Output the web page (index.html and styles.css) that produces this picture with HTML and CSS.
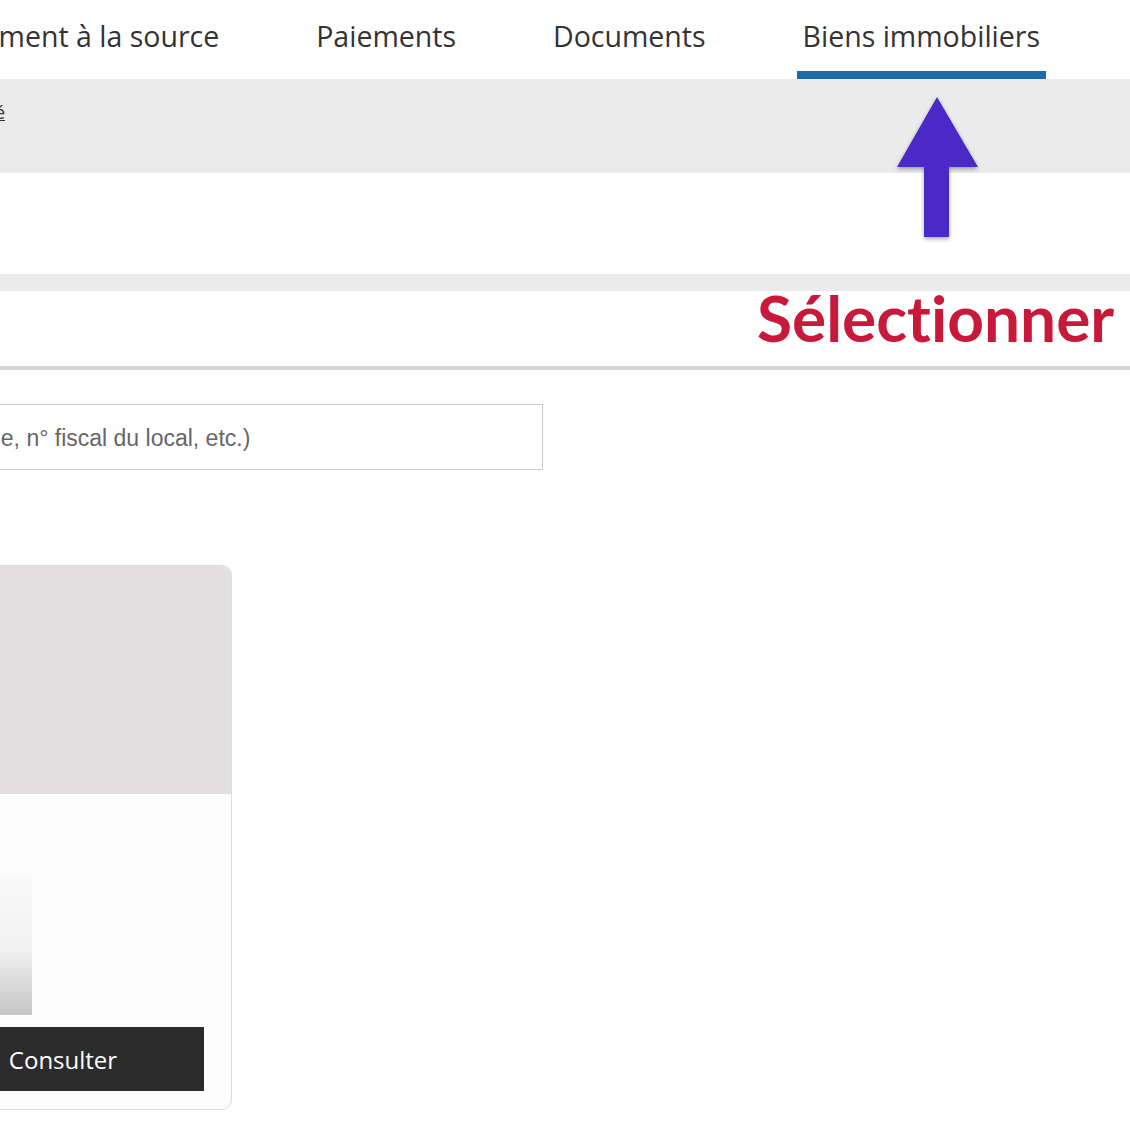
FILE: index.html
```html
<!DOCTYPE html>
<html>
<head>
    <meta charset="utf-8">
    <title>Biens immobiliers</title>
    <link rel="stylesheet" href="styles.css">
</head>
<body>
    <div class="page">
        <nav class="tabs">
            <a class="tab">Prélèvement à la source</a>
            <a class="tab">Paiements</a>
            <a class="tab">Documents</a>
            <a class="tab active">Biens immobiliers</a>
        </nav>
        <div class="crumbs">
            <div class="crumb-links"><a href="#">Accueil sécurisé</a></div>
        </div>
        <div class="blank"></div>
        <div class="strip"></div>
        <div class="title-bar"></div>

        <div class="main">
            <input class="search" type="text" placeholder="Rechercher un bien (adresse, n° fiscal du local, etc.)">

            <div class="cards">
                <div class="card">
                    <div class="card-top"></div>
                    <div class="card-body">
                        <div class="thumb"></div>
                        <button class="consult">Consulter</button>
                    </div>
                </div>
            </div>
        </div>
    </div>

    <!-- annotation drawn over the screenshot -->
    <svg class="arrow" width="100" height="160" viewBox="0 0 100 160">
        <polygon points="47,7 7,77 34,77 34,147 59,147 59,77 88,77" fill="#4a2ac7"/>
    </svg>
    <div class="note">Sélectionner</div>
</body>
</html>
```

FILE: styles.css
```css
body{
    margin: 0;
    overflow: hidden;
    position: relative;
    font-family: "Open Sans", "DejaVu Sans", sans-serif;
    color: #333333;
    background-color: #ffffff;
}

.page{
    margin-left: -320px;
    width: 1450px;
}

.tabs{
    display: flex;
    justify-content: flex-end;
    gap: 85px;
    padding-right: 84px;
    height: 79px;
    box-sizing: border-box;
}

.tab{
    font-size: 28.5px;
    line-height: 38px;
    padding: 17px 6px 16px;
    border-bottom: 8px solid transparent;
    white-space: nowrap;
    color: #333333;
}

.tab.active{
    border-bottom-color: #1b6aa9;
}

.crumbs{
    background-color: #ecebec;
    height: 94px;
}

.crumb-links{
    width: 325px;
    display: flex;
    justify-content: flex-end;
    padding-top: 21px;
    font-size: 18px;
    white-space: nowrap;
}

.crumb-links a{
    color: #333333;
}

.blank{
    height: 101px;
}

.strip{
    height: 17px;
    background-color: #ebebeb;
}

.title-bar{
    height: 75px;
    border-bottom: 4px solid #d6d6d6;
}

.main{
    padding-left: 20px;
}

.search{
    display: block;
    margin-top: 34px;
    width: 843px;
    height: 66px;
    box-sizing: border-box;
    border: 1px solid #c9c9c9;
    padding: 2px 16px 0;
    font-family: "Liberation Sans", Arial, sans-serif;
    font-size: 23px;
    outline: none;
}

.search::placeholder{
    color: #666666;
}

.cards{
    display: flex;
    margin-top: 95px;
    padding-left: 194px;
}

.card{
    width: 338px;
    box-sizing: border-box;
    border: 1px solid #dddddd;
    border-radius: 10px;
    overflow: hidden;
    background-color: #fdfdfd;
}

.card-top{
    height: 228px;
    background-color: #e1dfe0;
}

.card-body{
    padding: 79px 27px 18px;
}

.thumb{
    width: 110px;
    height: 142px;
    background: linear-gradient(#fafafa, #f1f1f1 55%, #c4c4c4);
}

.consult{
    display: block;
    width: 100%;
    height: 64px;
    margin-top: 12px;
    border: none;
    background-color: #2b2b2b;
    color: #ffffff;
    font-family: "Open Sans", sans-serif;
    font-size: 24px;
}

.arrow{
    position: absolute;
    left: 890px;
    top: 90px;
    filter: drop-shadow(0 2px 2px rgba(0, 0, 0, 0.35));
}

.note{
    position: absolute;
    left: 757px;
    top: 286px;
    font-family: Lato, sans-serif;
    font-weight: 700;
    font-size: 64px;
    line-height: 1;
    font-variant-ligatures: none;
    color: #c8193a;
    text-shadow: 0 0 3px #ffffff, 2px 2px 0 #ffffff, -2px -2px 0 #ffffff, 2px -2px 0 #ffffff, -2px 2px 0 #ffffff;
}
```
